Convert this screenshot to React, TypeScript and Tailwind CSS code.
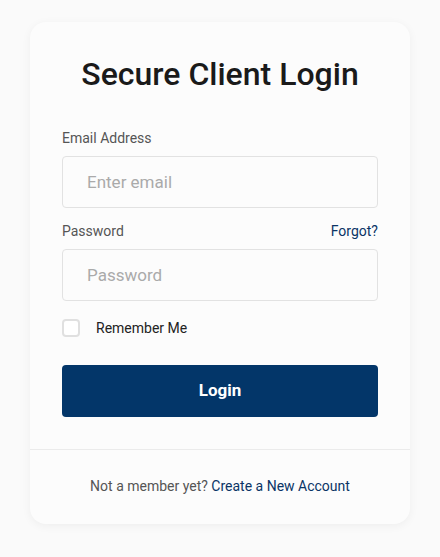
export default function App() {
  return (
    <div className="min-h-screen bg-[#fafafa] pt-[22px] font-['Roboto',sans-serif]">
      <div className="mx-auto w-[380px] rounded-2xl bg-[#fcfcfc] shadow-[0_2px_10px_rgba(0,0,0,0.05)]">
        <div className="px-8 pt-[33px] pb-8">
          <h1 className="text-center text-[32px] leading-[38px] font-medium text-[#1a1a1a]">
            Secure Client Login
          </h1>

          <form className="mt-[35px]" onSubmit={(e) => e.preventDefault()}>
            <label className="block text-sm leading-5 text-[#555]">Email Address</label>
            <input
              type="email"
              placeholder="Enter email"
              className="mt-2 block h-[52px] w-full rounded border border-[#e2e2e2] bg-[#fcfcfc] px-6 text-[17px] text-[#333] placeholder:text-[#aaa] outline-none"
            />

            <div className="mt-[13px] flex items-center justify-between text-sm leading-5">
              <label className="text-[#555]">Password</label>
              <a href="#" className="text-[#0a3466]">Forgot?</a>
            </div>
            <input
              type="password"
              placeholder="Password"
              className="mt-2 block h-[52px] w-full rounded border border-[#e2e2e2] bg-[#fcfcfc] px-6 text-[17px] text-[#333] placeholder:text-[#aaa] outline-none"
            />

            <label className="mt-[17px] flex items-center gap-4 text-sm leading-5 text-[#222]">
              <span className="h-[18px] w-[18px] rounded-[4px] border-2 border-[#e0e0e0] bg-white" />
              Remember Me
            </label>

            <button
              type="submit"
              className="mt-[27px] h-[52px] w-full rounded bg-[#033669] text-[17px] font-bold text-white"
            >
              Login
            </button>
          </form>
        </div>

        <div className="border-t border-[#ebebeb] pt-[26px] pb-[28px] text-center text-sm leading-5 text-[#555]">
          Not a member yet? <a href="#" className="text-[#0a3466]">Create a New Account</a>
        </div>
      </div>
    </div>
  );
}
